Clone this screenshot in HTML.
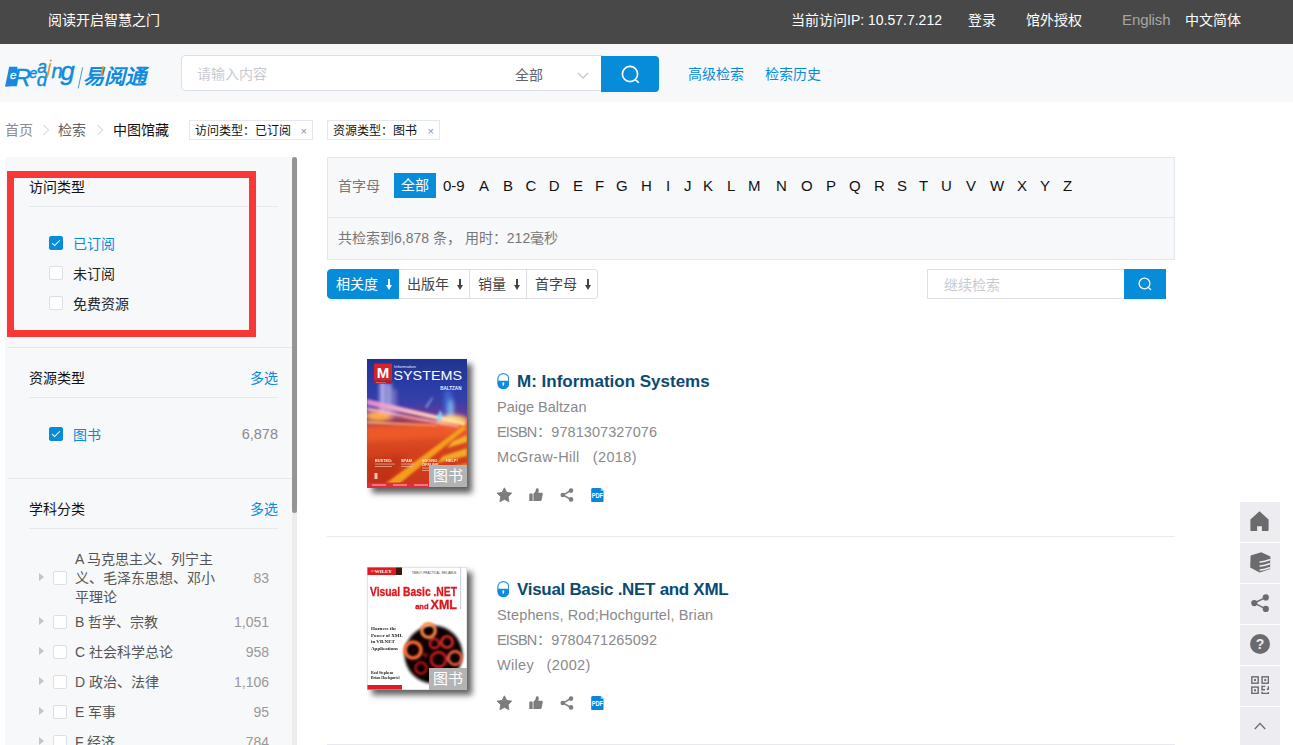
<!DOCTYPE html>
<html lang="zh-CN">
<head>
<meta charset="utf-8">
<title>eReading</title>
<style>
*{box-sizing:border-box;margin:0;padding:0}
html,body{width:1293px;height:745px;overflow:hidden;background:#fff}
body{font-family:"Liberation Sans",sans-serif;font-size:14px;color:#303133;position:relative}
.abs{position:absolute;white-space:nowrap}
/* top bar */
#top{position:absolute;left:0;top:0;width:1293px;height:44px;background:#484848}
#top .t{position:absolute;top:0;line-height:41px;font-size:14px;color:#fff;white-space:nowrap}
/* header */
#hdr{position:absolute;left:0;top:44px;width:1293px;height:58px;background:#f7f8fa}
#sbox{position:absolute;left:181px;top:55px;width:422px;height:36px;background:#fff;border:1px solid #dcdfe6;border-radius:4px 0 0 4px}
#sbtn{position:absolute;left:601px;top:56px;width:58px;height:36px;background:#068cd9;border-radius:0 4px 4px 0}
.lnk{color:#068cd9 !important}
/* breadcrumb */
.bc{position:absolute;top:121px;line-height:18px;font-size:14px;color:#606266;white-space:nowrap}
.tag{position:absolute;top:120px;height:20px;border:1px solid #e4e7ed;background:#fff;font-size:12px;line-height:20px;color:#111;white-space:nowrap;padding-left:5px}
.tag i{position:absolute;right:5px;top:0;font-style:normal;color:#909399;font-size:11px}
/* sidebar */
#side{position:absolute;left:5px;top:157px;width:287px;height:588px;background:#f7f8fa}
#sbar{position:absolute;left:292px;top:157px;width:5px;height:588px;background:#ececec}
#sthumb{position:absolute;left:292px;top:157px;width:5px;height:356px;background:#959595;border-radius:3px}
.sh{position:absolute;left:29px;font-size:14px;line-height:18px;color:#111;white-space:nowrap}
.sm{position:absolute;left:250px;font-size:14px;line-height:18px;color:#068cd9;white-space:nowrap}
.hl{position:absolute;height:1px;background:#e6e8ec}
.cb{position:absolute;width:14px;height:14px;border:1px solid #dcdfe6;border-radius:2px;background:#fff}
.cb.on{background:#068cd9;border-color:#068cd9}
.cb.on:after{content:"";position:absolute;left:4px;top:1px;width:3px;height:7px;border:1px solid #fff;border-left:0;border-top:0;transform:rotate(45deg)}
.ct{position:absolute;font-size:14px;line-height:18px;white-space:nowrap;color:#222}
.cn{position:absolute;font-size:14px;line-height:18px;white-space:nowrap;color:#999;text-align:right}
.tri{position:absolute;width:0;height:0;border-left:5px solid #c0c4cc;border-top:4px solid transparent;border-bottom:4px solid transparent}
#redbox{position:absolute;left:7px;top:171px;width:249px;height:166px;border:7px solid #f93737}
/* main */
#abox{position:absolute;left:327px;top:157px;width:848px;height:103px;background:#f7f8fa;border:1px solid #e4e7ed}
.al{position:absolute;top:176px;font-size:15px;line-height:20px;color:#111;white-space:nowrap}
.sort{position:absolute;top:269px;height:30px;border:1px solid #dcdfe6;border-left:0;background:#fff;font-size:14px;line-height:28px;color:#444;white-space:nowrap;padding-left:8px}
.ar{display:inline-block;position:relative;width:7px;height:11px;margin-left:7px;vertical-align:-1px}
.ar:before{content:"";position:absolute;left:3px;top:0;width:1.5px;height:7px;background:currentColor}
.ar:after{content:"";position:absolute;left:0.5px;top:6px;width:0;height:0;border-left:3.2px solid transparent;border-right:3.2px solid transparent;border-top:5px solid currentColor}
/* results */
.ttl{position:absolute;left:517px;font-size:17px;font-weight:bold;line-height:22px;color:#0b4a72;white-space:nowrap}
.meta{position:absolute;left:497px;font-size:14.5px;line-height:20px;color:#8a8a8a;white-space:nowrap}
.bk{position:absolute;left:367px;width:100px;box-shadow:5px 5px 6px rgba(0,0,0,.62)}
.bt{position:absolute;width:38px;height:22px;background:#b3b3b3;color:#fff;font-size:15px;line-height:22px;text-align:center}
/* right tools */
.rt{position:absolute;left:1240px;width:40px;height:40px;background:#edecf1}
</style>
</head>
<body>
<!-- TOP BAR -->
<div id="top">
  <span class="t" style="left:48px">阅读开启智慧之门</span>
  <span class="t" style="left:791px">当前访问IP: 10.57.7.212</span>
  <span class="t" style="left:968px">登录</span>
  <span class="t" style="left:1026px">馆外授权</span>
  <span class="t" style="left:1122px;color:#a6a6a6;font-size:15px;line-height:39px;letter-spacing:-.1px">English</span>
  <span class="t" style="left:1185px">中文简体</span>
</div>
<!-- HEADER -->
<div id="hdr"></div>
<svg class="abs" style="left:0;top:50px" width="160" height="50" viewBox="0 0 160 50">
<defs><linearGradient id="lg" x1="0" y1="0" x2="1" y2="0"><stop offset="0" stop-color="#2f7fd6"/><stop offset="1" stop-color="#0a8fe6"/></linearGradient></defs>
<path d="M9.2 16.8 L17.5 16.8 L15.6 36 L5 36.8 Z" fill="url(#lg)"/>
<g font-family="Liberation Sans, sans-serif" font-style="italic" fill="#0f8be0" stroke="#0f8be0" stroke-width=".45">
<text x="13.6" y="36" font-size="24.5" textLength="17.5" lengthAdjust="spacingAndGlyphs">R</text>
<text x="29.2" y="28.2" font-size="14.5">e</text>
<text x="37.3" y="23" font-size="17.5">a</text>
<text x="36.8" y="36" font-size="18.5">d</text>
<text x="51.4" y="27.8" font-size="20">n</text>
<text x="60.4" y="29.6" font-size="25" textLength="14.2" lengthAdjust="spacingAndGlyphs">g</text>
</g>
<text x="10" y="29.4" font-family="Liberation Sans, sans-serif" font-style="italic" font-size="11.5" fill="#fff" stroke="#fff" stroke-width=".3">e</text>
<path d="M46.2 27.4 L49.4 13.2 L51.2 13.2 L48 27.4 Z" fill="#f5921e"/>
<circle cx="50.8" cy="10.6" r="1.1" fill="#f5921e"/>
<path d="M78.2 38.4 L82.6 17.4" stroke="#2f8fe0" stroke-width=".9" fill="none"/>
<g transform="translate(83,34.4) skewX(-14)"><text x="0" y="0" font-family="Liberation Sans, sans-serif" font-weight="bold" font-size="21" fill="#0f8be0" textLength="63" lengthAdjust="spacingAndGlyphs">易阅通</text></g>
<path d="M100.2 26 L102.3 16.2 L104.2 16.2 L102.1 26 Z" fill="#f5921e"/>
</svg>
<div id="sbox">
  <span class="abs" style="left:15px;top:9px;line-height:18px;font-size:14px;color:#c7cad1">请输入内容</span>
  <span class="abs" style="left:333px;top:9.5px;line-height:18px;font-size:14px;color:#606266">全部</span>
  <svg class="abs" style="left:395px;top:16px" width="12" height="8" viewBox="0 0 12 8"><path d="M1 1 L6 6 L11 1" fill="none" stroke="#c0c4cc" stroke-width="1.2"/></svg>
</div>
<div id="sbtn">
  <svg class="abs" style="left:19px;top:8px" width="21" height="21" viewBox="0 0 21 21"><circle cx="10" cy="10" r="7.6" fill="none" stroke="#fff" stroke-width="1.6"/><path d="M15.3 15.6 L18.4 18.3" stroke="#fff" stroke-width="1.6" stroke-linecap="round"/></svg>
</div>
<span class="abs lnk" style="left:688px;top:65px;line-height:18px;font-size:14px">高级检索</span>
<span class="abs lnk" style="left:765px;top:65px;line-height:18px;font-size:14px">检索历史</span>

<!-- BREADCRUMB -->
<span class="bc" style="left:5px;color:#8a8c90">首页</span>
<svg class="abs" style="left:42px;top:124px" width="8" height="12" viewBox="0 0 8 12"><path d="M1.5 1 L6.5 6 L1.5 11" fill="none" stroke="#c8cbd2" stroke-width="1"/></svg>
<span class="bc" style="left:58px">检索</span>
<svg class="abs" style="left:96px;top:124px" width="8" height="12" viewBox="0 0 8 12"><path d="M1.5 1 L6.5 6 L1.5 11" fill="none" stroke="#c8cbd2" stroke-width="1"/></svg>
<span class="bc" style="left:113px;color:#111">中图馆藏</span>
<div class="tag" style="left:189px;width:124px">访问类型：已订阅<i>×</i></div>
<div class="tag" style="left:327px;width:113px">资源类型：图书<i>×</i></div>

<!-- SIDEBAR -->
<div id="side"></div>
<div id="sbar"></div><div id="sthumb"></div>
<span class="sh" style="top:178px">访问类型</span>
<div class="hl" style="left:29px;top:206px;width:249px"></div>
<div class="cb on" style="left:49px;top:236px"></div><span class="ct lnk" style="left:73px;top:235px">已订阅</span>
<div class="cb" style="left:49px;top:266px"></div><span class="ct" style="left:73px;top:265px">未订阅</span>
<div class="cb" style="left:49px;top:296px"></div><span class="ct" style="left:73px;top:295px">免费资源</span>
<div id="redbox"></div>
<div class="hl" style="left:8px;top:347px;width:284px"></div>
<span class="sh" style="top:369px">资源类型</span><span class="sm" style="top:369px">多选</span>
<div class="hl" style="left:29px;top:397px;width:249px"></div>
<div class="cb on" style="left:49px;top:427px"></div><span class="ct lnk" style="left:73px;top:426px">图书</span>
<span class="cn" style="left:218px;width:60px;top:425px;font-size:14.5px;color:#8a8a8a">6,878</span>
<div class="hl" style="left:8px;top:478px;width:284px"></div>
<span class="sh" style="top:500px">学科分类</span><span class="sm" style="top:500px">多选</span>
<div class="hl" style="left:29px;top:528px;width:249px"></div>
<!-- tree -->
<div class="tri" style="left:39px;top:573px"></div><div class="cb" style="left:53px;top:571px"></div>
<span class="ct" style="left:75px;top:550px;line-height:19px;color:#555">A 马克思主义、列宁主<br>义、毛泽东思想、邓小<br>平理论</span>
<span class="cn" style="left:209px;width:60px;top:569px">83</span>
<div class="tri" style="left:39px;top:617px"></div><div class="cb" style="left:53px;top:615px"></div>
<span class="ct" style="left:75px;top:613px;color:#555">B 哲学、宗教</span><span class="cn" style="left:209px;width:60px;top:613px">1,051</span>
<div class="tri" style="left:39px;top:647px"></div><div class="cb" style="left:53px;top:645px"></div>
<span class="ct" style="left:75px;top:643px;color:#555">C 社会科学总论</span><span class="cn" style="left:209px;width:60px;top:643px">958</span>
<div class="tri" style="left:39px;top:677px"></div><div class="cb" style="left:53px;top:675px"></div>
<span class="ct" style="left:75px;top:673px;color:#555">D 政治、法律</span><span class="cn" style="left:209px;width:60px;top:673px">1,106</span>
<div class="tri" style="left:39px;top:707px"></div><div class="cb" style="left:53px;top:705px"></div>
<span class="ct" style="left:75px;top:703px;color:#555">E 军事</span><span class="cn" style="left:209px;width:60px;top:703px">95</span>
<div class="tri" style="left:39px;top:737px"></div><div class="cb" style="left:53px;top:735px"></div>
<span class="ct" style="left:75px;top:733px;color:#555">F 经济</span><span class="cn" style="left:209px;width:60px;top:733px">784</span>

<!-- MAIN -->
<div id="abox"></div>
<div class="hl" style="left:328px;top:217px;width:846px;background:#e4e7ed"></div>
<span class="abs" style="left:338px;top:177px;line-height:18px;font-size:14px;color:#777">首字母</span>
<div class="abs" style="left:394px;top:173px;width:42px;height:25px;background:#068cd9;color:#fff;font-size:14px;line-height:25px;text-align:center">全部</div>
<span class="al" style="left:443px">0-9</span>
<span class="al" style="left:479px">A</span>
<span class="al" style="left:503px">B</span>
<span class="al" style="left:525.6px">C</span>
<span class="al" style="left:548.8px">D</span>
<span class="al" style="left:573px">E</span>
<span class="al" style="left:595px">F</span>
<span class="al" style="left:616px">G</span>
<span class="al" style="left:641px">H</span>
<span class="al" style="left:666px">I</span>
<span class="al" style="left:684px">J</span>
<span class="al" style="left:703px">K</span>
<span class="al" style="left:727px">L</span>
<span class="al" style="left:748px">M</span>
<span class="al" style="left:776px">N</span>
<span class="al" style="left:801px">O</span>
<span class="al" style="left:826px">P</span>
<span class="al" style="left:849px">Q</span>
<span class="al" style="left:874px">R</span>
<span class="al" style="left:897px">S</span>
<span class="al" style="left:919px">T</span>
<span class="al" style="left:941px">U</span>
<span class="al" style="left:966px">V</span>
<span class="al" style="left:990px">W</span>
<span class="al" style="left:1017px">X</span>
<span class="al" style="left:1040px">Y</span>
<span class="al" style="left:1063px">Z</span>
<span class="abs" style="left:338px;top:229px;line-height:18px;font-size:14px;color:#777">共检索到6,878 条， 用时：212毫秒</span>
<!-- sort -->
<div class="sort" style="left:327px;width:72px;background:#068cd9;border-color:#068cd9;color:#fff;border-radius:4px 0 0 4px;border-left:1px solid #068cd9">相关度<b class="ar"></b></div>
<div class="sort" style="left:399px;width:71px">出版年<b class="ar"></b></div>
<div class="sort" style="left:470px;width:57px">销量<b class="ar"></b></div>
<div class="sort" style="left:527px;width:71px;border-radius:0 4px 4px 0">首字母<b class="ar"></b></div>
<!-- secondary search -->
<div class="abs" style="left:927px;top:269px;width:198px;height:30px;border:1px solid #dcdfe6;background:#fff"><span class="abs" style="left:16px;top:6px;line-height:18px;font-size:14px;color:#c7cad1">继续检索</span></div>
<div class="abs" style="left:1124px;top:269px;width:42px;height:30px;background:#068cd9">
  <svg class="abs" style="left:13px;top:7px" width="16" height="16" viewBox="0 0 16 16"><circle cx="7.5" cy="7.5" r="5.4" fill="none" stroke="#fff" stroke-width="1.3"/><path d="M11.4 11.6 L13.6 13.6" stroke="#fff" stroke-width="1.3" stroke-linecap="round"/></svg>
</div>

<svg width="0" height="0" style="position:absolute">
<defs>
<symbol id="i-lock" viewBox="0 0 13 17">
  <path d="M.9 8.2 V6.2 A5.6 5.6 0 0 1 12.1 6.2 V8.2" fill="none" stroke="#1a8fe0" stroke-width="1.15"/>
  <path d="M.3 8 H12.7 V10.6 A6.2 6.2 0 0 1 .3 10.6 Z" fill="#0e8ae0"/>
  <path d="M6.5 9.6 a1 1 0 0 1 1 1 l-.45 2.5 h-1.1 l-.45 -2.5 a1 1 0 0 1 1 -1 z" fill="#fff"/>
</symbol>
<symbol id="i-star" viewBox="0 0 16 15"><path d="M8.00 0.80 L10.15 5.15 L14.94 5.84 L11.47 9.23 L12.29 14.01 L8.00 11.75 L3.71 14.01 L4.53 9.23 L1.06 5.84 L5.85 5.15 Z" fill="#7d7d7d" stroke="#7d7d7d" stroke-width=".9" stroke-linejoin="round"/></symbol>
<symbol id="i-thumb" viewBox="0 0 15 14">
  <rect x=".3" y="5.6" width="3.5" height="7.9" rx=".6" fill="#7d7d7d"/>
  <path d="M4.6 13.4 V6 C6.2 4.8 7 3 7.3 1 C7.5 0 8.8 -.1 9.5 .6 C10.4 1.5 10.3 3.2 9.7 4.8 H13 C14.2 4.8 14.6 5.8 14.3 6.8 L13.2 12.2 C13 13 12.4 13.5 11.5 13.5 H6 Z" fill="#7d7d7d"/>
</symbol>
<symbol id="i-share" viewBox="0 0 14 14">
  <path d="M10.8 2.6 L3 7 L10.8 11.4" fill="none" stroke="#7d7d7d" stroke-width="1.5"/>
  <circle cx="11" cy="2.6" r="2.3" fill="#7d7d7d"/><circle cx="2.8" cy="7" r="2.3" fill="#7d7d7d"/><circle cx="11" cy="11.4" r="2.3" fill="#7d7d7d"/>
</symbol>
<symbol id="i-pdf" viewBox="0 0 13 15">
  <path d="M1.6 0 H10 L13 2.8 V13.4 A1.6 1.6 0 0 1 11.4 15 H1.6 A1.6 1.6 0 0 1 0 13.4 V1.6 A1.6 1.6 0 0 1 1.6 0 Z" fill="#0a85dc"/>
  <path d="M10 0 V2.8 H13 Z" fill="#9ed0f4"/>
  <text x="6.5" y="10.2" font-family="Liberation Sans, sans-serif" font-size="6.6" font-weight="bold" fill="#fff" text-anchor="middle" textLength="11.8" lengthAdjust="spacingAndGlyphs">PDF</text>
</symbol>
</defs></svg>

<!-- RESULT 1 -->
<svg class="bk" style="top:359px" width="100" height="129" viewBox="0 0 100 129">
<defs>
 <linearGradient id="sky" x1="0" y1="0" x2="0" y2="1"><stop offset="0" stop-color="#21338f"/><stop offset=".2" stop-color="#2a3ca6"/><stop offset=".34" stop-color="#3a3fa8"/><stop offset=".43" stop-color="#6a3a98"/><stop offset=".5" stop-color="#b8404a"/><stop offset=".56" stop-color="#e0582a"/><stop offset=".7" stop-color="#d6421c"/><stop offset="1" stop-color="#c9361b"/></linearGradient>
 <linearGradient id="trail" x1="0" y1="0" x2="1" y2="0"><stop offset="0" stop-color="#e48ad0"/><stop offset=".45" stop-color="#ffc0c8"/><stop offset="1" stop-color="#fff0a0"/></linearGradient>
 <filter id="b1" x="-20%" y="-20%" width="140%" height="140%"><feGaussianBlur stdDeviation=".8"/></filter>
 <filter id="b2" x="-30%" y="-30%" width="160%" height="160%"><feGaussianBlur stdDeviation="2"/></filter>
 <filter id="b05" x="-10%" y="-10%" width="120%" height="120%"><feGaussianBlur stdDeviation=".35"/></filter>
 <clipPath id="c1"><rect width="100" height="129"/></clipPath>
</defs>
<g clip-path="url(#c1)">
<rect width="100" height="129" fill="url(#sky)"/>
<g filter="url(#b2)">
 <rect x="13" y="22" width="5" height="36" fill="#d8ccff" opacity=".9"/>
 <rect x="20" y="24" width="4" height="34" fill="#e4d8ff" opacity=".8"/>
 <rect x="26" y="30" width="3" height="26" fill="#c0b0f0" opacity=".6"/>
 <rect x="77" y="32" width="8" height="34" fill="#3d6ad8" opacity=".85"/>
 <ellipse cx="84" cy="50" rx="3" ry="10" fill="#8fd8ff" opacity=".7"/>
 <ellipse cx="12" cy="57" rx="13" ry="5" fill="#ffb72e" opacity="1"/>
 <ellipse cx="40" cy="58" rx="16" ry="3.5" fill="#6a1630" opacity=".85"/>
 <ellipse cx="86" cy="63" rx="15" ry="7" fill="#ffd873" opacity="1"/>
 <path d="M0 68 L100 62 L100 76 L0 82 Z" fill="#ee5a2a" opacity=".9"/>
 <path d="M0 100 L40 96 L20 129 L0 129 Z" fill="#b82c18" opacity=".6"/>
</g>
<g filter="url(#b1)">
 <path d="M0 40 L98 63 L98 66.5 L0 46 Z" fill="url(#trail)" opacity=".95"/>
 <path d="M0 48 L92 66.5 L92 68.5 L0 52 Z" fill="#ffb0c0" opacity=".8"/>
 <path d="M0 62 L70 66 L70 67.2 L0 64.5 Z" fill="#ffc890" opacity=".7"/>
 <path d="M0 55 L60 62 L60 63 L0 57 Z" fill="#ff8aa0" opacity=".6"/>
 <path d="M100 69 L96 67 L18 125 L32 125 Z" fill="#f5a21c" opacity=".95"/>
 <path d="M100 76 L100 83 L80 89 L86 82 Z" fill="#f7b82c" opacity=".9"/>
 <path d="M100 89 L100 97 L70 104 L76 97 Z" fill="#f7b82c" opacity=".85"/>
 <path d="M100 104 L100 112 L62 120 L68 112 Z" fill="#f5a828" opacity=".7"/>
 <path d="M69 60 l4 -9 l3 5 l-4 7 z" fill="#7fe0ff" opacity=".85"/>
 <path d="M58 48 l7 -10 l1 1 l-6 10 z" fill="#a8c8ff" opacity=".6"/>
</g>
<rect x="7" y="4.6" width="18" height="17" fill="#d6222b"/>
<rect x="7" y="21.6" width="18" height="3" fill="#b01a22"/>
<text x="16" y="19" font-family="Liberation Sans, sans-serif" font-weight="bold" font-size="15" fill="#fff" text-anchor="middle">M</text>
<text x="9" y="23.9" font-family="Liberation Sans, sans-serif" font-size="2.4" fill="#ffd0d0">start here.</text>
<text x="27" y="9.4" font-family="Liberation Sans, sans-serif" font-size="4.4" fill="#e8ecff">Information</text>
<text x="26.5" y="21.3" font-family="Liberation Sans, sans-serif" font-size="12.6" fill="#fff" textLength="68.5" lengthAdjust="spacingAndGlyphs">SYSTEMS</text>
<text x="94.5" y="31" font-family="Liberation Sans, sans-serif" font-weight="bold" font-size="4.6" fill="#eef0ff" text-anchor="end">BALTZAN</text>
<g font-family="Liberation Sans, sans-serif" font-weight="bold" font-size="3.9" fill="#ffecd0" filter="url(#b05)">
<text x="8" y="102.5">BUSTED:</text><text x="34" y="102.5">SPAM</text><text x="55" y="102.5">#GOING</text><text x="55" y="106.6">OFFLINE</text><text x="79" y="102.5">HELP!</text>
</g>
<g fill="#f6c0a0" opacity=".75"><rect x="8" y="104.6" width="20" height=".9"/><rect x="8" y="107" width="17" height=".9"/>
<rect x="34" y="104.6" width="14" height=".9"/><rect x="34" y="107" width="12" height=".9"/>
<rect x="55" y="108.6" width="14" height=".9"/><rect x="55" y="111" width="12" height=".9"/></g>
<rect x="7.5" y="114" width="3" height="6" fill="#f8e0d0" opacity=".85"/>
<rect x="0" y="123.6" width="100" height="5.4" fill="#de2c38"/>
<g fill="#ffc6c6" opacity=".8"><rect x="5" y="125.4" width="14" height="1.2"/><rect x="26" y="125.4" width="14" height="1.2"/><rect x="47" y="125.4" width="14" height="1.2"/></g>
</g>
</svg>
<div class="bt" style="left:429px;top:465px">图书</div>
<svg class="abs" style="left:496.7px;top:372.6px" width="12.6" height="16.5"><use href="#i-lock"/></svg>
<span class="ttl" style="top:371px">M: Information Systems</span>
<span class="meta" style="top:397px;letter-spacing:0px">Paige Baltzan</span>
<span class="meta" style="top:422px;letter-spacing:-.8px">EISBN</span><span class="meta" style="top:422px;left:537px">：</span><span class="meta" style="top:422px;left:551.3px;letter-spacing:.07px">9781307327076</span>
<span class="meta" style="top:447px;letter-spacing:0.34px">McGraw-Hill</span><span class="meta" style="top:447px;left:592.7px;letter-spacing:.4px">(2018)</span>
<svg class="abs" style="left:496.2px;top:487px" width="16.8" height="15.75"><use href="#i-star"/></svg>
<svg class="abs" style="left:529px;top:487.6px" width="14.4" height="13.5"><use href="#i-thumb"/></svg>
<svg class="abs" style="left:560.4px;top:487.8px" width="14" height="14"><use href="#i-share"/></svg>
<svg class="abs" style="left:591.4px;top:487.6px" width="12.8" height="14.4"><use href="#i-pdf"/></svg>
<div class="hl" style="left:327px;top:536px;width:848px;background:#e8e8ee"></div>

<!-- RESULT 2 -->
<svg class="bk" style="top:567px" width="100" height="123" viewBox="0 0 100 123">
<defs>
 <filter id="b3" x="-30%" y="-30%" width="160%" height="160%"><feGaussianBlur stdDeviation="1.5"/></filter>
 <filter id="b3r" x="-30%" y="-30%" width="160%" height="160%"><feGaussianBlur stdDeviation="1"/></filter>
 <clipPath id="c2"><rect width="100" height="123"/></clipPath>
</defs>
<g clip-path="url(#c2)">
<rect width="100" height="123" fill="#fff"/>
<rect x="0" y="0" width="35" height="8" fill="#e01a22"/>
<rect x="29" y="0" width="6" height="8" fill="#3a1a10"/>
<text x="4" y="6.3" font-family="Liberation Serif, serif" font-weight="bold" font-size="5" fill="#fff">©WILEY</text>
<text x="90" y="6.5" font-family="Liberation Sans, sans-serif" font-size="3" fill="#444" text-anchor="end">TIMELY. PRACTICAL. RELIABLE.</text>
<rect x="93" y="0" width="1.2" height="42" fill="#d0d4e0"/>
<g font-family="Liberation Sans, sans-serif" font-weight="bold" fill="#dd1a20" stroke="#dd1a20" stroke-width=".35" filter="url(#b05)">
<text x="3" y="29" font-size="12.5" textLength="87" lengthAdjust="spacingAndGlyphs">Visual Basic .NET</text>
<text x="90" y="42" font-size="7.5" text-anchor="end"><tspan>and </tspan><tspan font-size="12.5">XML</tspan></text>
</g>
<g font-family="Liberation Serif, serif" font-weight="bold" font-size="5" fill="#222" filter="url(#b05)">
<text x="4" y="63">Harness the</text><text x="4" y="69.5">Power of XML</text><text x="4" y="76">in VB.NET</text><text x="4" y="82.5">Applications</text>
<text x="4" y="107" font-size="3.8">Rod Stephens</text><text x="4" y="112" font-size="3.8">Brian Hochgurtel</text>
</g>
<g filter="url(#b3)">
 <circle cx="66.5" cy="87.5" r="29" fill="#070203"/>
 </g><g filter="url(#b3r)">
 <circle cx="61.5" cy="63.5" r="6.8" fill="none" stroke="#ff8a4a" stroke-width="3.2"/>
 <circle cx="46" cy="83" r="8" fill="none" stroke="#ff6a32" stroke-width="3.6"/>
 <circle cx="67.5" cy="76.5" r="4.6" fill="none" stroke="#e0242a" stroke-width="2.2"/>
 <circle cx="80" cy="75" r="5.6" fill="none" stroke="#f0342a" stroke-width="2.4"/>
 <circle cx="71.5" cy="92.5" r="7.4" fill="none" stroke="#d01a20" stroke-width="2.6"/>
 <circle cx="88" cy="91" r="6.6" fill="none" stroke="#ff6640" stroke-width="2.6"/>
 <circle cx="54" cy="101" r="5.6" fill="none" stroke="#b81418" stroke-width="2.4"/>
 <circle cx="58.5" cy="88" r="2.2" fill="#8a0c10"/>
</g>
<rect x="0" y="118" width="35" height="5" fill="#e01a22"/>
<rect x=".25" y=".25" width="99.5" height="122.5" fill="none" stroke="#c8c8c8" stroke-width=".5"/>
</g>
</svg>
<div class="bt" style="left:429px;top:668px">图书</div>
<svg class="abs" style="left:496.7px;top:580.6px" width="12.6" height="16.5"><use href="#i-lock"/></svg>
<span class="ttl" style="top:579px;letter-spacing:-.3px">Visual Basic .NET and XML</span>
<span class="meta" style="top:605px;letter-spacing:0.14px">Stephens, Rod;Hochgurtel, Brian</span>
<span class="meta" style="top:630px;letter-spacing:-.8px">EISBN</span><span class="meta" style="top:630px;left:537px">：</span><span class="meta" style="top:630px;left:551.3px;letter-spacing:.07px">9780471265092</span>
<span class="meta" style="top:655px;letter-spacing:0.3px">Wiley</span><span class="meta" style="top:655px;left:546.5px;letter-spacing:.4px">(2002)</span>
<svg class="abs" style="left:496.2px;top:695px" width="16.8" height="15.75"><use href="#i-star"/></svg>
<svg class="abs" style="left:529px;top:695.6px" width="14.4" height="13.5"><use href="#i-thumb"/></svg>
<svg class="abs" style="left:560.4px;top:695.8px" width="14" height="14"><use href="#i-share"/></svg>
<svg class="abs" style="left:591.4px;top:695.6px" width="12.8" height="14.4"><use href="#i-pdf"/></svg>
<div class="hl" style="left:327px;top:744px;width:848px;background:#e8e8ee"></div>

<div class="rt" style="top:502px"><svg class="abs" style="left:10px;top:8.6px" width="19" height="20.6" viewBox="0 0 19 20.6"><path d="M9.5 .3 L18.6 8.4 V18.8 A1.5 1.5 0 0 1 17.1 20.3 H11.9 V15.2 H7.1 V20.3 H1.9 A1.5 1.5 0 0 1 .4 18.8 V8.4 Z" fill="#6b6b6d"/></svg></div>
<div class="rt" style="top:543px"><svg class="abs" style="left:9px;top:8px" width="22" height="23" viewBox="0 0 22 23"><path d="M1.6 4.4 L12.3 1.2 L21.4 5.6 L21.4 18 L10.6 21.6 L1.2 16.4 Z" fill="#6b6b6d"/><path d="M11.2 11.1 Q16 10.6 20.6 8.7 M11.2 15.1 Q16 14.6 20.6 12.7 M11.2 19.1 Q16 18.6 20.6 16.7" stroke="#edecf1" stroke-width="1.55" stroke-linecap="round" fill="none"/><path d="M21.4 8 V19 L22 19 V8 Z" fill="#edecf1"/></svg></div>
<div class="rt" style="top:584px"><svg class="abs" style="left:11px;top:10px" width="19" height="19" viewBox="0 0 19 19"><path d="M14.8 3.4 L3.2 9.1 L14.8 14.9" fill="none" stroke="#6b6b6d" stroke-width="1.5"/><circle cx="14.8" cy="3.4" r="3.1" fill="#6b6b6d"/><circle cx="3.3" cy="9.1" r="3.1" fill="#6b6b6d"/><circle cx="14.8" cy="14.9" r="3.1" fill="#6b6b6d"/></svg></div>
<div class="rt" style="top:625px"><svg class="abs" style="left:10px;top:9px" width="20" height="20" viewBox="0 0 20 20"><circle cx="10" cy="10" r="10" fill="#6b6b6d"/><text x="10" y="15" font-family="Liberation Sans, sans-serif" font-weight="bold" font-size="14" fill="#edecf1" text-anchor="middle">?</text></svg></div>
<div class="rt" style="top:666px"><svg class="abs" style="left:10.6px;top:9.8px" width="18.6" height="18.6" viewBox="0 0 19 19" fill="none" stroke="#6b6b6d" stroke-width="1.45"><rect x=".85" y=".85" width="6.5" height="6.5"/><rect x="11.3" y=".85" width="6.5" height="6.5"/><rect x=".85" y="11.3" width="6.5" height="6.5"/><rect x="3.1" y="3.1" width="2" height="2" fill="#6b6b6d" stroke="none"/><rect x="13.55" y="3.1" width="2" height="2" fill="#6b6b6d" stroke="none"/><rect x="3.1" y="13.55" width="2" height="2" fill="#6b6b6d" stroke="none"/><path d="M14.6 10.6 H11.3 V14 H14.4 M17.8 10.6 V13.6 H16.2 M11.3 16.2 V17.9 H17.8 V16.4" stroke-width="1.5"/></svg></div>
<div class="rt" style="top:707px;height:38px"><svg class="abs" style="left:14px;top:14.8px" width="12" height="8" viewBox="0 0 12 8"><path d="M.8 7 L6 1.4 L11.2 7" fill="none" stroke="#666669" stroke-width="1.25"/></svg></div>
</body>
</html>
